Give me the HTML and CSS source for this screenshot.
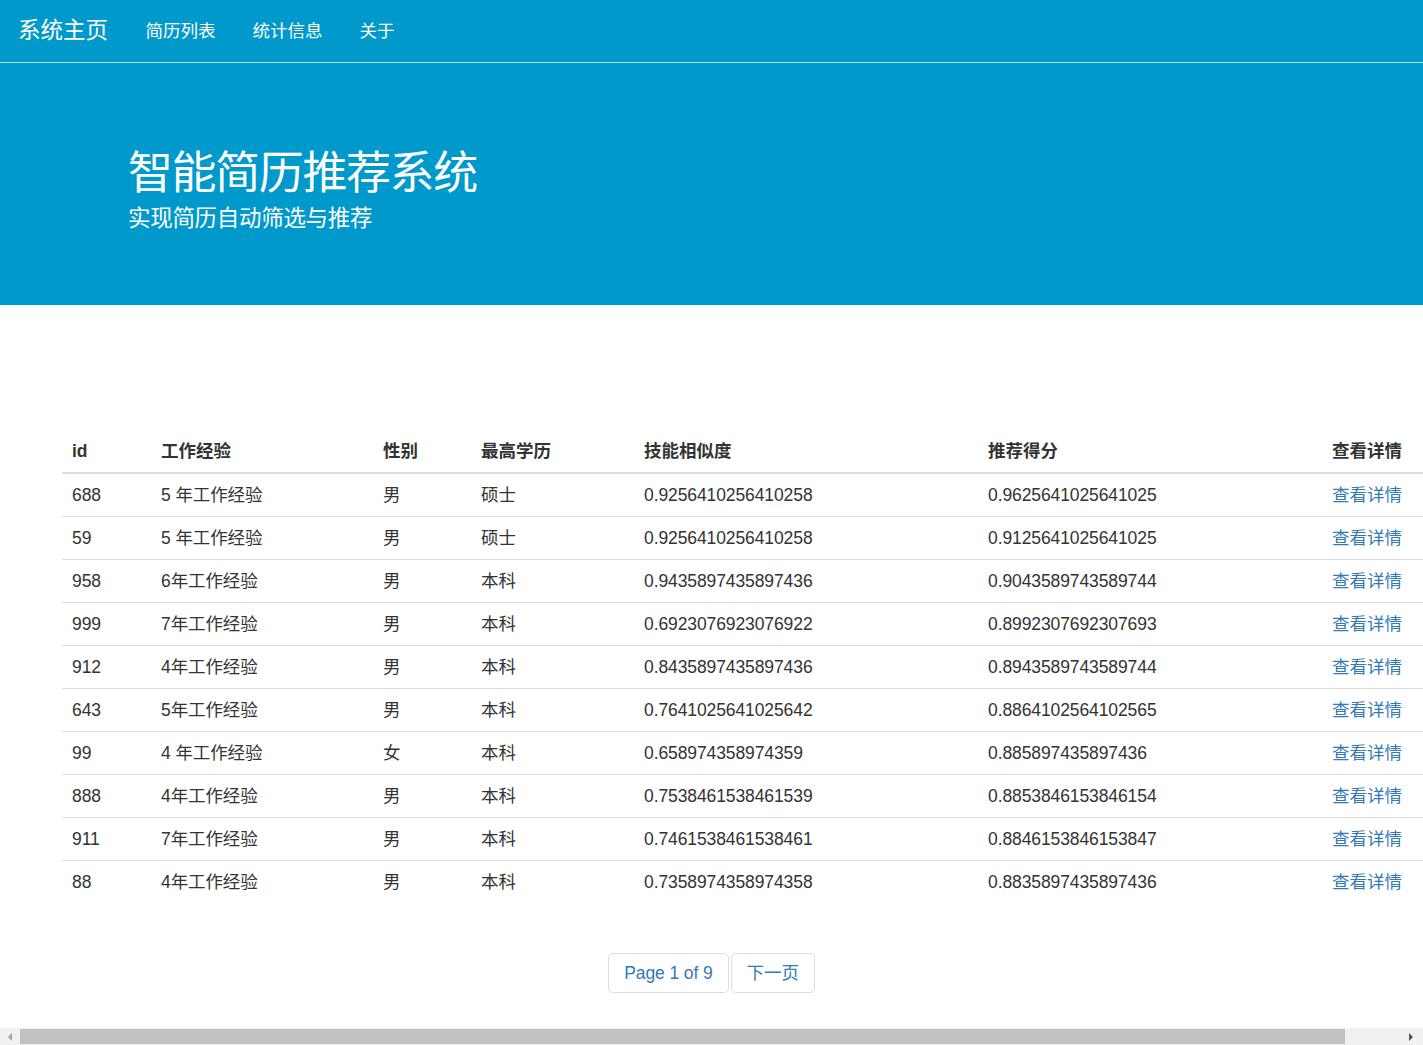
FILE: index.html
```html
<!DOCTYPE html>
<html lang="zh-CN">
<head>
<meta charset="utf-8">
<title>智能简历推荐系统</title>
<link rel="stylesheet" href="styles.css">
</head>
<body>
<nav class="navbar">
  <a class="brand" href="#">系统主页</a>
  <ul class="nav">
    <li><a href="#">简历列表</a></li>
    <li><a href="#">统计信息</a></li>
    <li><a href="#">关于</a></li>
  </ul>
</nav>
<header class="jumbotron">
  <h1>智能简历推荐系统</h1>
  <p>实现简历自动筛选与推荐</p>
</header>
<main class="content">
  <table class="table">
    <colgroup>
      <col class="c1"><col class="c2"><col class="c3"><col class="c4"><col class="c5"><col class="c6"><col class="c7">
    </colgroup>
    <thead>
      <tr><th>id</th><th>工作经验</th><th>性别</th><th>最高学历</th><th>技能相似度</th><th>推荐得分</th><th>查看详情</th></tr>
    </thead>
    <tbody>
      <tr><td>688</td><td>5 年工作经验</td><td>男</td><td>硕士</td><td>0.9256410256410258</td><td>0.9625641025641025</td><td><a href="#">查看详情</a></td></tr>
      <tr><td>59</td><td>5 年工作经验</td><td>男</td><td>硕士</td><td>0.9256410256410258</td><td>0.9125641025641025</td><td><a href="#">查看详情</a></td></tr>
      <tr><td>958</td><td>6年工作经验</td><td>男</td><td>本科</td><td>0.9435897435897436</td><td>0.9043589743589744</td><td><a href="#">查看详情</a></td></tr>
      <tr><td>999</td><td>7年工作经验</td><td>男</td><td>本科</td><td>0.6923076923076922</td><td>0.8992307692307693</td><td><a href="#">查看详情</a></td></tr>
      <tr><td>912</td><td>4年工作经验</td><td>男</td><td>本科</td><td>0.8435897435897436</td><td>0.8943589743589744</td><td><a href="#">查看详情</a></td></tr>
      <tr><td>643</td><td>5年工作经验</td><td>男</td><td>本科</td><td>0.7641025641025642</td><td>0.8864102564102565</td><td><a href="#">查看详情</a></td></tr>
      <tr><td>99</td><td>4 年工作经验</td><td>女</td><td>本科</td><td>0.658974358974359</td><td>0.885897435897436</td><td><a href="#">查看详情</a></td></tr>
      <tr><td>888</td><td>4年工作经验</td><td>男</td><td>本科</td><td>0.7538461538461539</td><td>0.8853846153846154</td><td><a href="#">查看详情</a></td></tr>
      <tr><td>911</td><td>7年工作经验</td><td>男</td><td>本科</td><td>0.7461538461538461</td><td>0.8846153846153847</td><td><a href="#">查看详情</a></td></tr>
      <tr><td>88</td><td>4年工作经验</td><td>男</td><td>本科</td><td>0.7358974358974358</td><td>0.8835897435897436</td><td><a href="#">查看详情</a></td></tr>
    </tbody>
  </table>
  <nav class="pager">
    <a href="#" class="page-btn">Page 1 of 9</a><a href="#" class="page-btn">下一页</a>
  </nav>
</main>
<div class="hscroll">
  <span class="arrow arrow-left"></span>
  <span class="thumb"></span>
  <span class="arrow arrow-right"></span>
</div>
</body>
</html>
```
FILE: styles.css
```css
html, body {
  margin: 0;
  padding: 0;
  overflow: hidden;
  background: #fff;
}
body {
  font-family: "Liberation Sans", Arial, "Noto Sans CJK SC", sans-serif;
  font-size: 17.5px;
  color: #333;
  width: 1423px;
  height: 1045px;
}
a { text-decoration: none; }

.navbar {
  display: flex;
  align-items: center;
  height: 62px;
  background: #0099cc;
  border-bottom: 1px solid #a6e6f2;
}
.brand {
  color: #fff;
  font-size: 22.5px;
  line-height: 62px;
  padding: 0 18px;
  margin-right: 1px;
}
.nav {
  display: flex;
  list-style: none;
  margin: 0;
  padding: 0;
}
.nav a {
  display: block;
  color: #fff;
  font-size: 17.5px;
  line-height: 62px;
  padding: 0 18.5px;
}

.jumbotron {
  background: #0099cc;
  color: #fff;
  height: 242px;
  box-sizing: border-box;
  padding: 83px 0 0 128px;
}
.jumbotron h1 {
  margin: 0;
  font-size: 45px;
  font-weight: normal;
  line-height: 56px;
  letter-spacing: -1.4px;
}
.jumbotron p {
  margin: 0;
  font-size: 22.5px;
  line-height: 34px;
  letter-spacing: -0.3px;
}

.content {
  padding-top: 125px;
}
.table {
  border-collapse: collapse;
  margin-left: 62px;
  width: 1420px;
  table-layout: fixed;
}
.c1 { width: 89px; }
.c2 { width: 222px; }
.c3 { width: 98px; }
.c4 { width: 163px; }
.c5 { width: 344px; }
.c6 { width: 344px; }
.c7 { width: 160px; }
.table th, .table td {
  text-align: left;
  padding: 10px 10px;
  line-height: 22px;
  white-space: nowrap;
  vertical-align: middle;
}
.table td {
  letter-spacing: -0.1px;
}
.table th {
  font-weight: bold;
  border-bottom: 2px solid #ddd;
}
.table td {
  border-top: 1px solid #ddd;
}
.table td a { color: #337ab7; letter-spacing: 0; }

.pager {
  display: flex;
  justify-content: center;
  gap: 2px;
  margin-top: 50px;
}
.page-btn {
  display: block;
  height: 40px;
  box-sizing: border-box;
  line-height: 38px;
  padding: 0 15px;
  border: 1px solid #ddd;
  border-radius: 5px;
  color: #337ab7;
  font-size: 17.5px;
  letter-spacing: -0.1px;
}

.hscroll {
  position: fixed;
  left: 0;
  bottom: 0;
  width: 1423px;
  height: 17px;
  background: #f1f1f1;
  display: flex;
  align-items: center;
}
.hscroll .thumb {
  display: block;
  width: 1325px;
  height: 15px;
  background: #c1c1c1;
  margin: 0 64px 0 8px;
}
.arrow {
  display: block;
  width: 0;
  height: 0;
  border-top: 4px solid transparent;
  border-bottom: 4px solid transparent;
}
.arrow-left {
  border-right: 4px solid #a3a3a3;
  margin-left: 8px;
}
.arrow-right {
  border-left: 4px solid #505050;
}
```
